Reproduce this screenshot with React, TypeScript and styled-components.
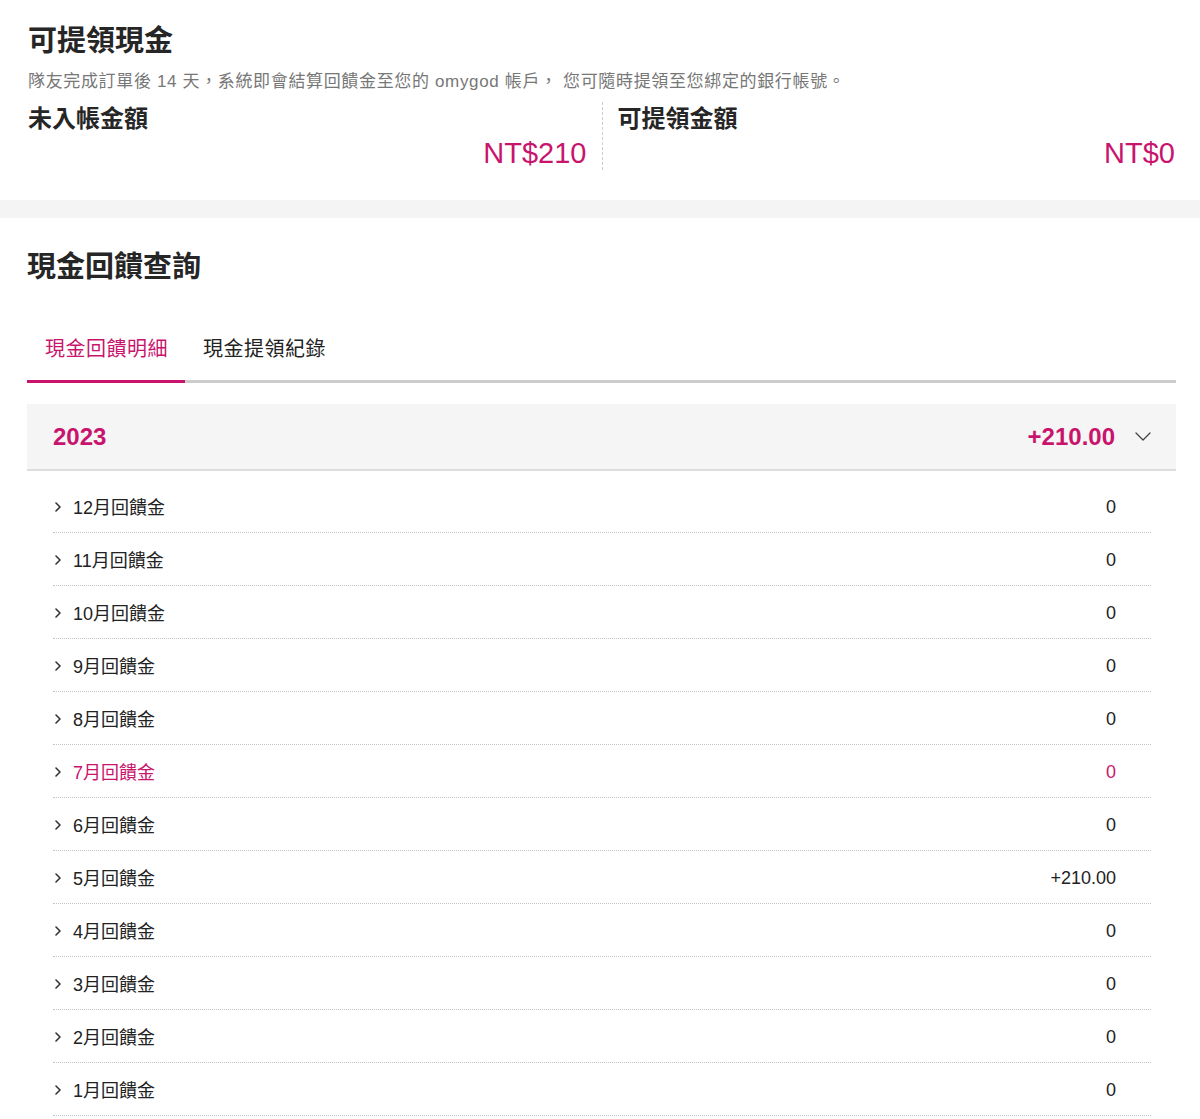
import React from "react";
import styled, { createGlobalStyle } from "styled-components";

const PINK = "#c8146d";

const GlobalStyle = createGlobalStyle`
  html, body { margin: 0; padding: 0; background: #fff; }
  body {
    font-family: "Helvetica Neue", "Liberation Sans", Arial, "Noto Sans CJK TC", sans-serif;
    color: #222;
  }
  * { box-sizing: border-box; }
`;

const Page = styled.div`
  width: 1200px;
`;

const TopSection = styled.section`
  padding: 21px 25px 30px 28px;
`;

const Title = styled.h1`
  margin: 0;
  font-size: 29px;
  line-height: 40px;
  font-weight: 700;
  color: #262626;
`;

const Desc = styled.p`
  margin: 9px 0 0;
  font-size: 17px;
  line-height: 24px;
  letter-spacing: 0.65px;
  color: #777;
`;

const Stats = styled.div`
  display: grid;
  grid-template-columns: 1fr 1fr;
  margin-top: 8px;
`;

const Stat = styled.div<{ $divider?: boolean }>`
  display: flex;
  flex-direction: column;
  padding: ${(p) => (p.$divider ? "0 0 0 15px" : "0 15px 0 0")};
  border-left: ${(p) => (p.$divider ? "1px dashed #cfcfcf" : "none")};
`;

const StatLabel = styled.div`
  font-size: 24px;
  line-height: 34px;
  font-weight: 700;
  color: #262626;
`;

const StatValue = styled.div`
  text-align: right;
  font-size: 29px;
  line-height: 34px;
  color: ${PINK};
`;

const Band = styled.div`
  height: 18px;
  background: #f4f4f4;
`;

const QuerySection = styled.section`
  padding: 29px 24px 0 27px;
`;

const SectionTitle = styled.h2`
  margin: 0;
  font-size: 29px;
  line-height: 40px;
  font-weight: 700;
  color: #262626;
`;

const TabBar = styled.div`
  display: flex;
  margin-top: 32px;
  border-bottom: 3px solid #cccccc;
`;

const Tab = styled.button<{ $active?: boolean }>`
  background: none;
  border: none;
  margin: 0 0 -3px;
  padding: 16px 17px 17px 18px;
  font-family: inherit;
  font-size: 20px;
  line-height: 28px;
  letter-spacing: 0.5px;
  color: ${(p) => (p.$active ? PINK : "#222")};
  border-bottom: 3px solid ${(p) => (p.$active ? PINK : "transparent")};
  cursor: pointer;
`;

const YearBlock = styled.div`
  margin-top: 21px;
`;

const YearHeader = styled.div`
  display: flex;
  align-items: center;
  height: 67px;
  padding: 0 25px 0 26px;
  background: #f5f5f5;
  border-bottom: 2px solid #dddddd;
`;

const YearLabel = styled.div`
  flex: 1;
  font-size: 24px;
  font-weight: 700;
  color: ${PINK};
`;

const YearTotal = styled.div`
  font-size: 24px;
  font-weight: 700;
  color: ${PINK};
  margin-right: 20px;
`;

const RowList = styled.ul`
  list-style: none;
  margin: 0;
  padding: 9px 25px 0 26px;
`;

const Row = styled.li<{ $active?: boolean }>`
  display: flex;
  align-items: center;
  height: 53px;
  padding: 0 35px 0 1px;
  border-bottom: 1px dotted #c4c4c4;
  font-size: 18px;
  color: ${(p) => (p.$active ? PINK : "#222")};
`;

const Chevron = styled.svg`
  flex: none;
  margin-top: 2px;
`;

const RowLabel = styled.span`
  flex: 1;
  margin-left: 11px;
`;

const RowValue = styled.span`
  padding-top: 3px;
`;

const ChevronRight = () => (
  <Chevron width="8" height="12" viewBox="0 0 8 12" fill="none">
    <polyline points="2,2 6,6 2,10" stroke="#333" strokeWidth="1.6" strokeLinecap="round" strokeLinejoin="round" />
  </Chevron>
);

const ChevronDown = () => (
  <svg width="16" height="9" viewBox="0 0 16 9" fill="none">
    <polyline points="1,1 8,8 15,1" stroke="#444" strokeWidth="1.3" strokeLinecap="round" strokeLinejoin="round" />
  </svg>
);

const months = [
  { m: 12, v: "0" },
  { m: 11, v: "0" },
  { m: 10, v: "0" },
  { m: 9, v: "0" },
  { m: 8, v: "0" },
  { m: 7, v: "0", active: true },
  { m: 6, v: "0" },
  { m: 5, v: "+210.00" },
  { m: 4, v: "0" },
  { m: 3, v: "0" },
  { m: 2, v: "0" },
  { m: 1, v: "0" },
];

export default function App() {
  return (
    <Page>
      <GlobalStyle />
      <TopSection>
        <Title>可提領現金</Title>
        <Desc>隊友完成訂單後 14 天，系統即會結算回饋金至您的 omygod 帳戶， 您可隨時提領至您綁定的銀行帳號。</Desc>
        <Stats>
          <Stat>
            <StatLabel>未入帳金額</StatLabel>
            <StatValue>NT$210</StatValue>
          </Stat>
          <Stat $divider>
            <StatLabel>可提領金額</StatLabel>
            <StatValue>NT$0</StatValue>
          </Stat>
        </Stats>
      </TopSection>
      <Band />
      <QuerySection>
        <SectionTitle>現金回饋查詢</SectionTitle>
        <TabBar>
          <Tab $active>現金回饋明細</Tab>
          <Tab>現金提領紀錄</Tab>
        </TabBar>
        <YearBlock>
          <YearHeader>
            <YearLabel>2023</YearLabel>
            <YearTotal>+210.00</YearTotal>
            <ChevronDown />
          </YearHeader>
          <RowList>
            {months.map((r) => (
              <Row key={r.m} $active={r.active}>
                <ChevronRight />
                <RowLabel>{r.m}月回饋金</RowLabel>
                <RowValue>{r.v}</RowValue>
              </Row>
            ))}
          </RowList>
        </YearBlock>
      </QuerySection>
    </Page>
  );
}
